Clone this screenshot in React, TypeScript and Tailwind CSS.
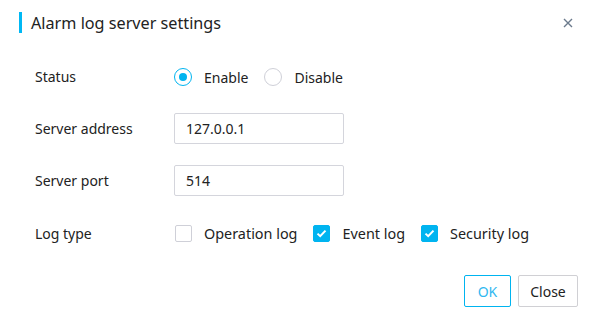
import React, { useState } from 'react';

const font = { fontFamily: '"Noto Sans", "Open Sans", sans-serif' };

function Radio({ checked, label, onClick }: { checked: boolean; label: string; onClick: () => void }) {
  return (
    <label className="flex items-center cursor-pointer" onClick={onClick}>
      <span
        className={`w-[18px] h-[18px] rounded-full border flex items-center justify-center bg-white ${
          checked ? 'border-[#00b4f0]' : 'border-[#cfd0d8]'
        }`}
      >
        {checked && <span className="w-[8px] h-[8px] rounded-full bg-[#00b4f0]" />}
      </span>
      <span className="ml-[12px] text-[14px] text-[#222]">{label}</span>
    </label>
  );
}

function Check({ checked, label, onClick }: { checked: boolean; label: string; onClick: () => void }) {
  return (
    <label className="flex items-center cursor-pointer" onClick={onClick}>
      <span
        className={`w-[17px] h-[17px] rounded-[2px] border flex items-center justify-center ${
          checked ? 'border-[#00b4f0] bg-[#00b4f0]' : 'border-[#cfd0d8] bg-white'
        }`}
      >
        {checked && (
          <svg width="11" height="9" viewBox="0 0 11 9">
            <path d="M1.5 4.6 L4.2 7.2 L9.5 1.6" stroke="white" strokeWidth="2" fill="none" />
          </svg>
        )}
      </span>
      <span className="ml-[12px] text-[14.4px] text-[#222]">{label}</span>
    </label>
  );
}

export default function App() {
  const [enabled, setEnabled] = useState(true);
  const [address, setAddress] = useState('127.0.0.1');
  const [port, setPort] = useState('514');
  const [types, setTypes] = useState({ operation: false, event: true, security: true });

  return (
    <div className="w-[595px] h-[316px] bg-white relative overflow-hidden" style={font}>
      <div className="flex items-center h-[21px] mt-[12px] pl-[19px] pr-[22px]">
        <div className="w-[3px] h-[21px] bg-[#00b8f4]" />
        <h2 className="ml-[9px] text-[16.2px] text-[#222] flex-1 mt-[2px]">Alarm log server settings</h2>
        <svg width="10" height="10" viewBox="0 0 10 10">
          <path d="M1 1 L9 9 M9 1 L1 9" stroke="#6b7a8c" strokeWidth="1.4" />
        </svg>
      </div>

      <div className="mt-[28px] pl-[35px]">
        <div className="flex items-center h-[32px]">
          <div className="w-[139px] text-[14px] text-[#222] -mt-[2px]">Status</div>
          <div className="flex items-center gap-[16px]">
            <Radio checked={enabled} label="Enable" onClick={() => setEnabled(true)} />
            <Radio checked={!enabled} label="Disable" onClick={() => setEnabled(false)} />
          </div>
        </div>

        <div className="flex items-center h-[31px] mt-[20px]">
          <div className="w-[139px] text-[14px] text-[#222]">Server address</div>
          <input
            value={address}
            onChange={(e) => setAddress(e.target.value)}
            className="w-[170px] h-[31px] border border-[#d4d5dc] rounded-[2px] px-[11px] text-[14px] text-[#222] outline-none"
          />
        </div>

        <div className="flex items-center h-[31px] mt-[21px]">
          <div className="w-[139px] text-[14px] text-[#222]">Server port</div>
          <input
            value={port}
            onChange={(e) => setPort(e.target.value)}
            className="w-[170px] h-[31px] border border-[#d4d5dc] rounded-[2px] px-[11px] text-[14px] text-[#222] outline-none"
          />
        </div>

        <div className="flex items-center h-[32px] mt-[22px]">
          <div className="w-[140px] text-[14px] text-[#222] -mt-[2px]">Log type</div>
          <div className="flex items-center gap-[16px]">
            <Check
              checked={types.operation}
              label="Operation log"
              onClick={() => setTypes({ ...types, operation: !types.operation })}
            />
            <Check
              checked={types.event}
              label="Event log"
              onClick={() => setTypes({ ...types, event: !types.event })}
            />
            <Check
              checked={types.security}
              label="Security log"
              onClick={() => setTypes({ ...types, security: !types.security })}
            />
          </div>
        </div>
      </div>

      <div className="flex justify-end gap-[7px] pr-[17px] mt-[25px]">
        <button className="w-[47px] h-[32px] border border-[#00b4f0] rounded-[2px] text-[14px] text-[#30b8f0] bg-white">
          OK
        </button>
        <button className="w-[60px] h-[32px] border border-[#d0d0d4] rounded-[2px] text-[14px] text-[#222] bg-white">
          Close
        </button>
      </div>
    </div>
  );
}
